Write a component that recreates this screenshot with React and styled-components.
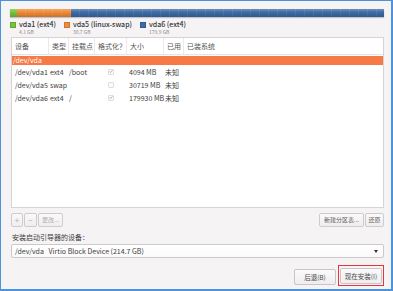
import React from "react";
import styled, { createGlobalStyle } from "styled-components";

const GlobalStyle = createGlobalStyle`
  html, body {
    margin: 0;
    padding: 0;
    background: #f6f3f5;
  }
  * {
    box-sizing: border-box;
  }
`;

const Frame = styled.div`
  width: 393px;
  height: 291px;
  border-style: solid;
  border-color: #4d93dc;
  border-width: 1px 2px 2px 1px;
  background: #f6f3f5;
  padding: 8px 8px 0 9px;
  display: flex;
  flex-direction: column;
  font-family: "Noto Sans CJK SC", "Noto Sans", sans-serif;
  font-size: 7px;
  color: #3c3c3c;
  overflow: hidden;
`;

const UsageBar = styled.div`
  display: flex;
  height: 8px;
  width: 374px;
  box-shadow: 0 1px 1px rgba(40, 60, 100, 0.25);
`;

const Segment = styled.div`
  width: ${(p) => p.$w};
  flex: ${(p) => (p.$grow ? 1 : "none")};
  background: ${(p) => p.$color};
  background-image: linear-gradient(
    to bottom,
    rgba(255, 255, 255, 0.25) 0%,
    rgba(255, 255, 255, 0) 40%,
    rgba(0, 0, 0, 0.18) 100%
  ),
  repeating-linear-gradient(
    to right,
    transparent 0,
    transparent 8px,
    rgba(255, 255, 255, 0.08) 8px,
    rgba(255, 255, 255, 0.08) 9px
  );
`;

const Legend = styled.div`
  display: flex;
  gap: 8px;
  margin-top: 3px;
  height: 17px;
`;

const LegendItem = styled.div`
  display: flex;
  align-items: flex-start;
  gap: 3px;
`;

const Swatch = styled.span`
  width: 6px;
  height: 6px;
  margin-top: 2px;
  background: ${(p) => p.$color};
  border: 1px solid rgba(0, 0, 0, 0.15);
`;

const LegendText = styled.div`
  display: flex;
  flex-direction: column;
`;

const LegendName = styled.span`
  display: block;
  height: 9px;
  line-height: 9px;
  font-size: 7px;
  font-weight: 500;
  color: #333;
`;

const LegendSize = styled.span`
  display: block;
  height: 5px;
  font-size: 5px;
  line-height: 5px;
  color: #8d8a8c;
`;

const Table = styled.div`
  margin-left: 1px;
  width: 373px;
  height: 171px;
  background: #fff;
  border: 1px solid #d6d2d5;
  display: flex;
  flex-direction: column;
`;

const cols = "36px 20px 26px 32px 37px 20px 1fr";

const HeadRow = styled.div`
  display: grid;
  grid-template-columns: ${cols};
  height: 17px;
  border-bottom: 1px solid #e6e3e5;
  align-items: center;
`;

const HeadCell = styled.div`
  padding-left: 3px;
  color: #555;
  height: 100%;
  display: flex;
  align-items: center;
  border-left: ${(p) => (p.$first ? "none" : "1px solid #ece9eb")};
  white-space: nowrap;
  overflow: hidden;
`;

const Body = styled.div`
  padding-top: 1px;
`;

const DiskRow = styled.div`
  height: 9px;
  background: #f57a45;
  color: #fff;
  display: flex;
  align-items: center;
  padding-left: 1px;
  line-height: 9px;
`;

const Row = styled.div`
  display: grid;
  grid-template-columns: ${cols};
  height: 13px;
  align-items: center;
  white-space: nowrap;
`;

const Cell = styled.div`
  padding-left: ${(p) => (p.$pad ? p.$pad : "3px")};
  display: flex;
  justify-content: ${(p) => (p.$center ? "center" : "flex-start")};
`;

const Check = styled.span`
  width: 6px;
  height: 6px;
  margin-left: -2px;
  border: 1px solid #e0dde0;
  border-radius: 1px;
  background: #fbfafa;
  display: flex;
  align-items: center;
  justify-content: center;
`;

const Toolbar = styled.div`
  display: flex;
  justify-content: space-between;
  margin-top: 5px;
  margin-left: 1px;
  width: 373px;
`;

const ButtonGroup = styled.div`
  display: flex;
  gap: ${(p) => p.$gap || "1px"};
`;

const SmallButton = styled.button`
  height: 14px;
  width: ${(p) => p.$w};
  padding: 0;
  font-family: inherit;
  font-size: ${(p) => p.$fs || "6px"};
  color: ${(p) => (p.$dim ? "#b0adaf" : "#5a5a5a")};
  background: linear-gradient(#fbfafa, #efedee);
  border: 1px solid #cfcbce;
  border-radius: 2px;
  display: flex;
  align-items: center;
  justify-content: center;
  line-height: 1;
`;

const Label = styled.div`
  margin-top: 5px;
  margin-left: 2px;
  height: 11px;
  line-height: 11px;
  color: #3c3c3c;
`;

const Combo = styled.div`
  margin-top: 1px;
  margin-left: 1px;
  width: 373px;
  height: 14px;
  background: linear-gradient(#fff, #fbfafb);
  border: 1px solid #ccc8cb;
  border-radius: 2px;
  display: flex;
  align-items: center;
  justify-content: space-between;
  padding: 0 5px 0 3px;
  white-space: pre;
`;

const Arrow = styled.span`
  width: 0;
  height: 0;
  border-left: 2px solid transparent;
  border-right: 2px solid transparent;
  border-top: 3px solid #333;
`;

const Footer = styled.div`
  display: flex;
  justify-content: flex-end;
  align-items: flex-end;
  gap: 2px;
  margin-top: 7px;
  width: 374px;
`;

const DialogButton = styled.button`
  width: 42px;
  height: 16px;
  padding: 0;
  font-family: inherit;
  font-size: 6.5px;
  color: #4a4a4a;
  background: linear-gradient(#fbfafa, #efedee);
  border: 1px solid #c9c5c8;
  border-radius: 2px;
  line-height: 1;
`;

const Highlight = styled.div`
  border: 1px solid #e8333a;
  padding: 2px 0 0 1px;
  width: 46px;
  height: 21px;
  margin-bottom: -1px;
`;

const partitions = [
  { dev: "/dev/vda1", type: "ext4", mount: "/boot", fmt: true, size: "4094 MB" },
  { dev: "/dev/vda5", type: "swap", mount: "", fmt: false, size: "30719 MB" },
  { dev: "/dev/vda6", type: "ext4", mount: "/", fmt: true, size: "179930 MB" },
];

const legend = [
  { name: "vda1 (ext4)", size: "4.1 GB", color: "#76c43c" },
  { name: "vda5 (linux-swap)", size: "30.7 GB", color: "#f08a36" },
  { name: "vda6 (ext4)", size: "179.9 GB", color: "#3d6ca6" },
];

const headers = ["设备", "类型", "挂载点", "格式化？", "大小", "已用", "已装系统"];

function Tick() {
  return (
    <svg width="5" height="5" viewBox="0 0 5 5">
      <path d="M0.6 2.6 L1.9 3.9 L4.4 1" fill="none" stroke="#9f9c9e" strokeWidth="0.9" />
    </svg>
  );
}

export default function App() {
  return (
    <>
      <GlobalStyle />
      <Frame>
        <UsageBar>
          <Segment $w="7px" $color="#76c43c" />
          <Segment $w="54px" $color="#f08a36" />
          <Segment $grow $color="#3d6ca6" />
        </UsageBar>
        <Legend>
          {legend.map((l) => (
            <LegendItem key={l.name}>
              <Swatch $color={l.color} />
              <LegendText>
                <LegendName>{l.name}</LegendName>
                <LegendSize>{l.size}</LegendSize>
              </LegendText>
            </LegendItem>
          ))}
        </Legend>
        <Table>
          <HeadRow>
            {headers.map((h, i) => (
              <HeadCell key={h} $first={i === 0}>
                {h}
              </HeadCell>
            ))}
          </HeadRow>
          <Body>
            <DiskRow>/dev/vda</DiskRow>
            {partitions.map((p) => (
              <Row key={p.dev}>
                <Cell>{p.dev}</Cell>
                <Cell $pad="2px">{p.type}</Cell>
                <Cell $pad="1px">{p.mount}</Cell>
                <Cell $center>
                  <Check>{p.fmt && <Tick />}</Check>
                </Cell>
                <Cell>{p.size}</Cell>
                <Cell $pad="2px">未知</Cell>
                <Cell />
              </Row>
            ))}
          </Body>
        </Table>
        <Toolbar>
          <ButtonGroup>
            <SmallButton $w="12px" $fs="8px" $dim>+</SmallButton>
            <SmallButton $w="13px" $fs="8px" $dim>−</SmallButton>
            <SmallButton $w="25px" $dim>更改...</SmallButton>
          </ButtonGroup>
          <ButtonGroup>
            <SmallButton $w="45px">新建分区表...</SmallButton>
            <SmallButton $w="19px">还原</SmallButton>
          </ButtonGroup>
        </Toolbar>
        <Label>安装启动引导器的设备：</Label>
        <Combo>
          <span>{"/dev/vda   Virtio Block Device (214.7 GB)"}</span>
          <Arrow />
        </Combo>
        <Footer>
          <DialogButton>后退(B)</DialogButton>
          <Highlight>
            <DialogButton>现在安装(I)</DialogButton>
          </Highlight>
        </Footer>
      </Frame>
    </>
  );
}
